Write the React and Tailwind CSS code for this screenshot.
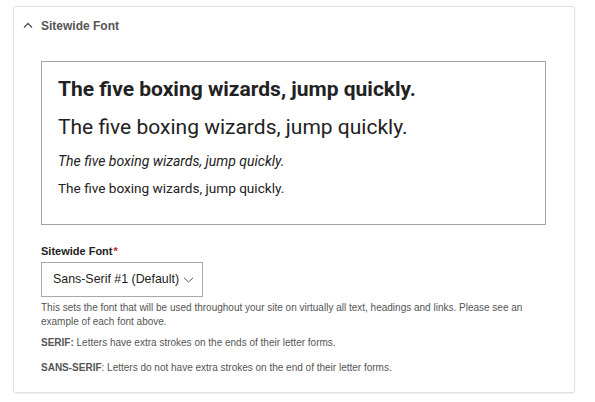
export default function App() {
  return (
    <div className="min-h-screen bg-white pl-[13px] pt-[6px]" style={{ fontFamily: '"Liberation Sans", Arial, sans-serif' }}>
      <div className="w-[562px] h-[387px] rounded-[3px] border border-[#e1e0e8] bg-white shadow-[0_1px_2px_rgba(0,0,0,0.06)]">
        <div className="flex h-[37px] items-center pl-[9px]">
          <svg width="10" height="7" viewBox="0 0 10 7" className="mr-[8px]">
            <path d="M1 5.5 L5 1.5 L9 5.5" fill="none" stroke="#555" strokeWidth="1.4" />
          </svg>
          <span className="text-[12px] font-bold text-[#555]">Sitewide Font</span>
        </div>

        <div className="px-[27px]">
          <div className="mt-[17px] h-[164px] w-[505px] border border-[#a3a3a3] pl-[16px] pt-[14px] text-[#222]" style={{ fontFamily: 'Roboto, sans-serif' }}>
            <div className="text-[21px] font-bold leading-[26px]">The five boxing wizards, jump quickly.</div>
            <div className="mt-[12px] text-[21px] leading-[26px]">The five boxing wizards, jump quickly.</div>
            <div className="mt-[12px] text-[14px] italic leading-[18px]">The five boxing wizards, jump quickly.</div>
            <div className="mt-[9px] text-[13.6px] leading-[18px]">The five boxing wizards, jump quickly.</div>
          </div>

          <div className="mt-[19px] text-[11px] font-bold leading-[14px] text-[#222]">
            Sitewide Font<span className="ml-[1px] text-[#d0202a]">*</span>
          </div>
          <div className="mt-[4px] flex h-[35px] w-[162px] items-center border border-[#a8a8a8] pl-[11px] text-[12.4px] text-[#222]">
            <span>Sans-Serif #1 (Default)</span>
            <svg width="11" height="6" viewBox="0 0 11 6" className="ml-[4px]">
              <path d="M1 0.8 L5.5 5 L10 0.8" fill="none" stroke="#444" strokeWidth="0.9" />
            </svg>
          </div>

          <div className="mt-[4px] text-[10px] leading-[14px] text-[#555]">
            This sets the font that will be used throughout your site on virtually all text, headings and links. Please see an example of each font above.
          </div>
          <div className="mt-[7px] text-[10px] leading-[14px] text-[#555]">
            <span className="font-bold">SERIF:</span> Letters have extra strokes on the ends of their letter forms.
          </div>
          <div className="mt-[11px] text-[10px] leading-[14px] text-[#555]">
            <span className="font-bold">SANS-SERIF</span>: Letters do not have extra strokes on the end of their letter forms.
          </div>
        </div>
      </div>
    </div>
  );
}
